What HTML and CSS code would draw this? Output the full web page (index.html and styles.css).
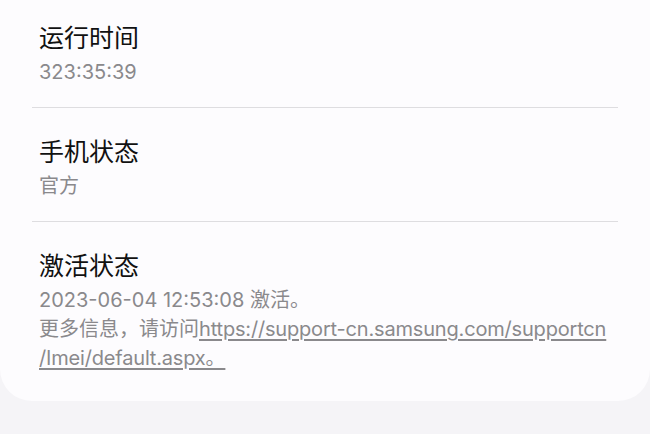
FILE: index.html
```html
<!DOCTYPE html>
<html lang="zh-CN">
<head>
<meta charset="utf-8">
<link rel="stylesheet" href="styles.css">
</head>
<body>
<div class="card">
  <div class="item first">
    <div class="title">运行时间</div>
    <div class="sub">323:35:39</div>
  </div>
  <div class="divider"></div>
  <div class="item">
    <div class="title">手机状态</div>
    <div class="sub">官方</div>
  </div>
  <div class="divider"></div>
  <div class="item">
    <div class="title">激活状态</div>
    <div class="sub">2023-06-04 12:53:08 激活。<br>更多信息，请访问<a class="link" href="#">https://support-cn.samsung.com/supportcn<br>/Imei/default.aspx。 </a></div>
  </div>
</div>
</body>
</html>
```
FILE: styles.css
```css
html, body {
  margin: 0;
  padding: 0;
  background: #f5f4f7;
}
body {
  width: 650px;
  height: 434px;
  overflow: hidden;
  font-family: Inter, "Noto Sans CJK SC", sans-serif;
}
.card {
  background: #fdfcfe;
  border-radius: 0 0 32px 32px;
  height: 401px;
  box-sizing: border-box;
}
.item {
  padding: 26px 32px 20px 39px;
}
.item.first {
  padding-top: 20px;
}
.title {
  font-size: 25px;
  line-height: 36px;
  color: #111111;
}
.sub {
  margin-top: 2px;
  font-size: 20px;
  line-height: 29px;
  color: #8a898c;
}
.link {
  color: #8a898c;
  text-decoration: underline;
  text-underline-offset: 3px;
  letter-spacing: -0.18px;
}
.last-sub {
  line-height: 30px;
}
.divider {
  height: 1px;
  background: #dedde0;
  margin: 0 32px;
}
```
